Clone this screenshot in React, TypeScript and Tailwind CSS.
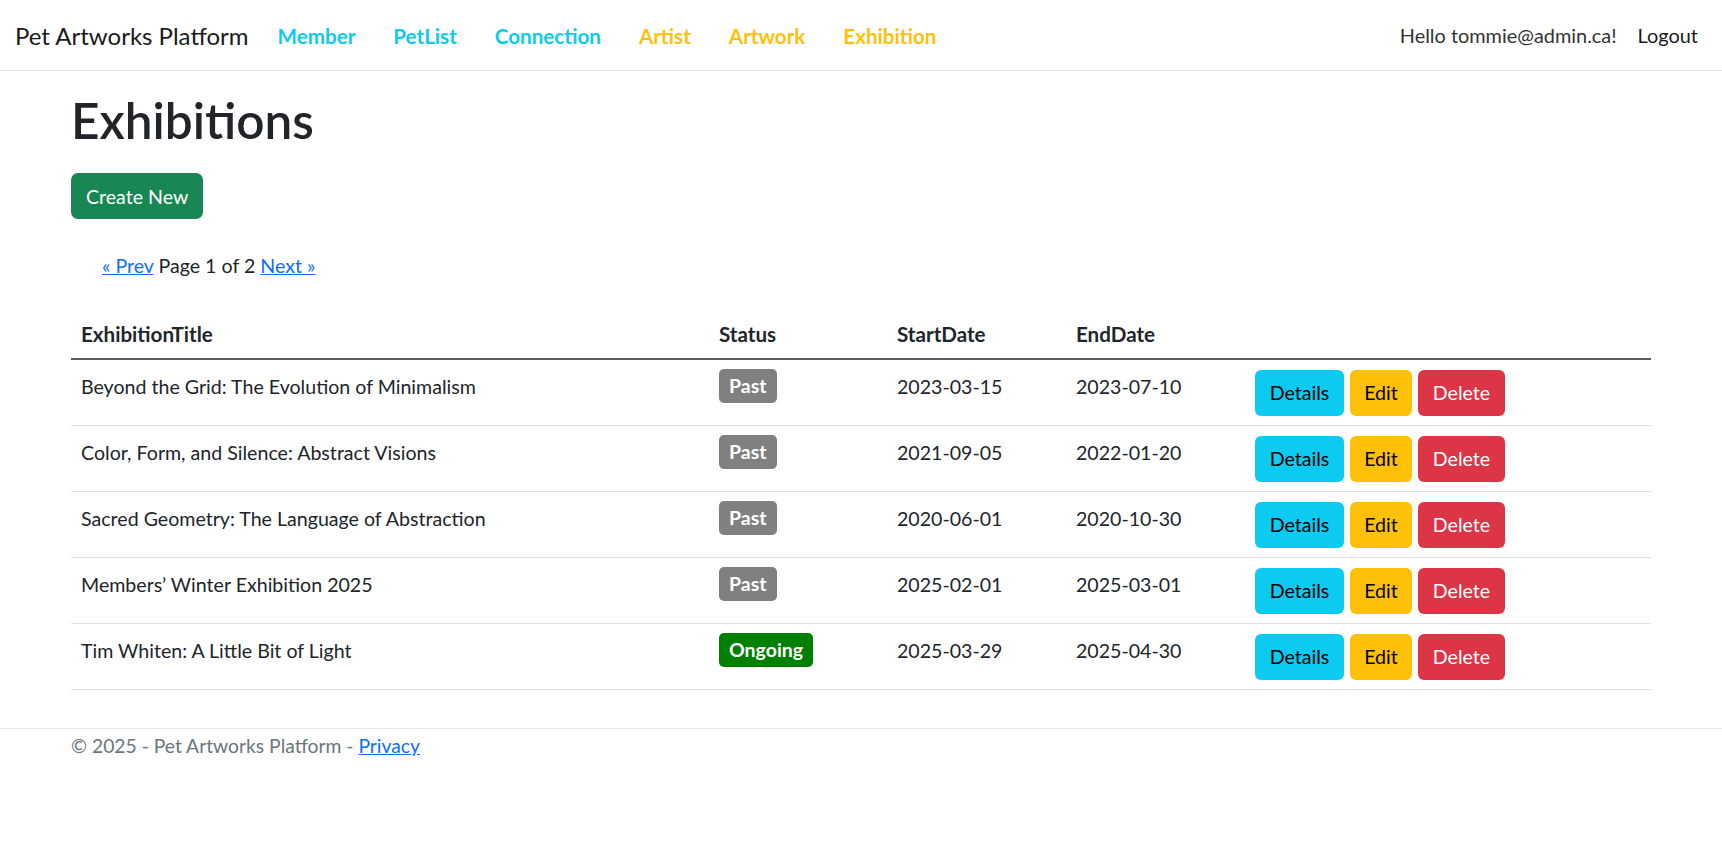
const rows = [
    { title: 'Beyond the Grid: The Evolution of Minimalism', status: 'Past', start: '2023-03-15', end: '2023-07-10' },
    { title: 'Color, Form, and Silence: Abstract Visions', status: 'Past', start: '2021-09-05', end: '2022-01-20' },
    { title: 'Sacred Geometry: The Language of Abstraction', status: 'Past', start: '2020-06-01', end: '2020-10-30' },
    { title: 'Members\u2019 Winter Exhibition 2025', status: 'Past', start: '2025-02-01', end: '2025-03-01' },
    { title: 'Tim Whiten: A Little Bit of Light', status: 'Ongoing', start: '2025-03-29', end: '2025-04-30' },
]

const font = "font-['Segoe_UI','Lato','Noto_Sans',sans-serif]"

function StatusBadge({ status }: { status: string }) {
    const bg = status === 'Ongoing' ? 'bg-[#008000]' : 'bg-[#808080]'
    return (
        <span className={`inline-flex h-[34px] items-center rounded-[5px] px-[10px] text-[19.5px] font-bold text-white ${bg}`}>
            {status}
        </span>
    )
}

export default function App() {
    return (
        <div className={`min-h-[866px] bg-white text-[#212529] ${font}`}>
            <nav className="flex h-[71px] items-center border-b border-[#e6e6e6] pl-[15px] pr-[24px] pt-[2px]">
                <span className="mr-[29px] text-[24px] text-[#1a1a1a]">Pet Artworks Platform</span>
                <div className="flex items-center gap-[38px] text-[20.6px] font-bold">
                    <a className="text-[#0dcaf0]">Member</a>
                    <a className="text-[#0dcaf0]">PetList</a>
                    <a className="text-[#0dcaf0]">Connection</a>
                    <a className="text-[#ffc107]">Artist</a>
                    <a className="text-[#ffc107]">Artwork</a>
                    <a className="text-[#ffc107]">Exhibition</a>
                </div>
                <div className="ml-auto flex items-center gap-[21px] text-[19.9px] text-[#333]">
                    <span>Hello tommie@admin.ca!</span>
                    <a className="text-[#1a1a1a]">Logout</a>
                </div>
            </nav>

            <main className="px-[71px] pt-[20px]">
                <h1 className="text-[49.5px] font-semibold leading-[1.2]">Exhibitions</h1>
                <button className="mt-[23px] h-[46px] rounded-[7px] bg-[#198754] px-[15px] text-[19.6px] text-white">
                    Create New
                </button>
                <div className="mt-[32px] pl-[31px] text-[19.6px]">
                    <a className="text-[#0d6efd] underline">&laquo; Prev</a> Page 1 of 2{' '}
                    <a className="text-[#0d6efd] underline">Next &raquo;</a>
                </div>

                <div className="mt-[34px] text-[19.6px]">
                    <div className="grid grid-cols-[638px_178px_179px_179px_1fr] border-b-2 border-[#5c5c5c] text-[20.6px] font-bold">
                        <div className="px-[10px] pb-[8px] pt-[4px]">ExhibitionTitle</div>
                        <div className="px-[10px] pb-[8px] pt-[4px]">Status</div>
                        <div className="px-[10px] pb-[8px] pt-[4px]">StartDate</div>
                        <div className="px-[10px] pb-[8px] pt-[4px]">EndDate</div>
                        <div />
                    </div>
                    {rows.map((r) => (
                        <div
                            key={r.title}
                            className="grid h-[66px] grid-cols-[638px_178px_179px_179px_1fr] border-b border-[#dee2e6]"
                        >
                            <div className="px-[10px] pt-[12px]">{r.title}</div>
                            <div className="px-[10px] pt-[9px]">
                                <StatusBadge status={r.status} />
                            </div>
                            <div className="px-[10px] pt-[12px]">{r.start}</div>
                            <div className="px-[10px] pt-[12px]">{r.end}</div>
                            <div className="flex items-start gap-[6px] px-[10px] pt-[10px]">
                                <button className="h-[46px] w-[89px] rounded-[6px] bg-[#0dcaf0] text-black">Details</button>
                                <button className="h-[46px] w-[62px] rounded-[6px] bg-[#ffc107] text-black">Edit</button>
                                <button className="h-[46px] w-[87px] rounded-[6px] bg-[#dc3545] text-white">Delete</button>
                            </div>
                        </div>
                    ))}
                </div>
            </main>

            <footer className="mt-[38px] border-t border-[#e6e6e6] px-[71px] pt-[3px] text-[19.3px] text-[#6c757d]">
                &copy; 2025 - Pet Artworks Platform - <a className="text-[#0d6efd] underline">Privacy</a>
            </footer>
        </div>
    )
}
